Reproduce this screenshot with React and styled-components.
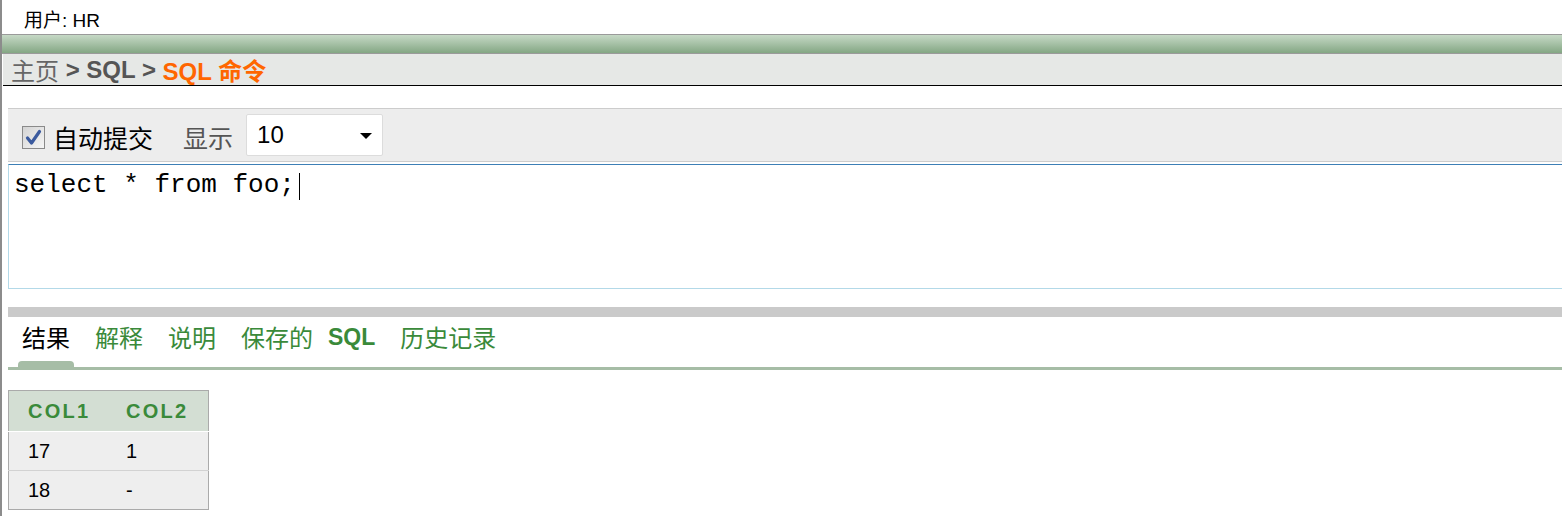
import React from 'react';
import styled, {createGlobalStyle} from 'styled-components';

const GlobalStyle = createGlobalStyle`
  html, body {
    margin: 0;
    padding: 0;
    background: #fff;
  }
  body {
    font-family: "Liberation Sans", Arial, "Noto Sans CJK SC", sans-serif;
    color: #000;
  }
`;

const Page = styled.div`
  min-height: 516px;
  border-left: 2px solid #8c8c8c;
  box-sizing: border-box;
  overflow: hidden;
`;

const UserBar = styled.div`
  height: 34px;
  display: flex;
  align-items: center;
  padding-left: 22px;
  padding-top: 2px;
  box-sizing: border-box;
  font-size: 19px;
`;

const GreenBar = styled.div`
  height: 18px;
  border-top: 1px solid #9a9a9a;
  border-bottom: 1px solid #9a9a9a;
  background: linear-gradient(#c6d9c6, #84a784);
`;

const Crumbs = styled.div`
  height: 31px;
  display: flex;
  align-items: center;
  padding-left: 8px;
  background: #e6e8e6;
  border-bottom: 1px solid #000;
  margin-left: 1px;
  font-size: 24px;
  white-space: pre;
`;

const Crumb = styled.span`
  color: ${p => (p.$current ? '#ff6600' : p.$home ? '#666' : '#555')};
  font-weight: ${p => (p.$home ? 'normal' : 'bold')};
`;

const Main = styled.div`
  padding-left: 6px;
  margin-top: 22px;
`;

const Toolbar = styled.div`
  height: 52px;
  display: flex;
  align-items: center;
  padding-left: 14px;
  background: #ededed;
  border-top: 1px solid #cccccc;
  border-bottom: 1px solid #cccccc;
  font-size: 25px;
  font-family: "Noto Sans CJK SC", sans-serif;
`;

const CheckBox = styled.span`
  width: 21px;
  height: 21px;
  border: 1px solid #8a8a8a;
  background: linear-gradient(135deg, #d4d4d4, #f6f6f6);
  display: flex;
  align-items: center;
  justify-content: center;
  margin-top: 5px;
`;

const Label = styled.span`
  color: ${p => (p.$muted ? '#555' : '#000')};
  margin-left: ${p => p.$gap || 0}px;
  margin-top: 4px;
  line-height: 1;
`;

const Select = styled.div`
  width: 137px;
  height: 42px;
  margin-left: 13px;
  background: #fff;
  border: 1px solid #dcdcdc;
  border-radius: 2px;
  box-sizing: border-box;
  display: flex;
  align-items: center;
  justify-content: space-between;
  padding: 0 10px 0 10px;
  font-family: "Liberation Sans", Arial, sans-serif;
  font-size: 24px;
`;

const Caret = styled.span`
  width: 0;
  height: 0;
  border-left: 6px solid transparent;
  border-right: 6px solid transparent;
  border-top: 6px solid #000;
  margin-top: 2px;
`;

const Editor = styled.div`
  margin-top: 2px;
  height: 125px;
  box-sizing: border-box;
  border: 1px solid #b3d9e8;
  border-top-color: #3d7fb6;
  border-right: none;
  padding: 5px 5px;
  font-family: "Liberation Mono", "Courier New", monospace;
  font-size: 26px;
  white-space: pre;
  display: flex;
  align-items: flex-start;
`;

const TextCursor = styled.span`
  display: inline-block;
  width: 1px;
  height: 27px;
  background: #000;
  margin-top: 3px;
  margin-left: 4px;
`;

const Divider = styled.div`
  margin-top: 18px;
  height: 10px;
  background: #cacaca;
`;

const Tabs = styled.div`
  display: flex;
  gap: 17px;
  padding-left: 10px;
  height: 50px;
  border-bottom: 3px solid #a6bda6;
  font-family: "Noto Sans CJK SC", sans-serif;
  font-size: 24px;
`;

const Tab = styled.div`
  position: relative;
  padding: 0 4px 12px;
  display: flex;
  align-items: center;
  color: ${p => (p.$active ? '#000' : '#3a8a3a')};
  white-space: pre;

  &::after {
    content: '';
    display: ${p => (p.$active ? 'block' : 'none')};
    position: absolute;
    left: 0;
    right: 0;
    bottom: -2px;
    height: 8px;
    background: #a6bda6;
    border-radius: 4px 4px 0 0;
  }
`;

const Latin = styled.span`
  font-family: "Liberation Sans", Arial, sans-serif;
  font-weight: bold;
  font-size: 23px;
  margin-left: 15px;
  margin-top: 2px;
`;

const Table = styled.table`
  margin-top: 20px;
  border-collapse: collapse;
  border: 1px solid #aaaaaa;
  width: 201px;
`;

const Th = styled.th`
  height: 40px;
  padding: 0 0 0 19px;
  text-align: left;
  background: #d3ded3;
  color: #3a8a3a;
  font-size: 20px;
  letter-spacing: 2.3px;
  font-weight: bold;
  border-bottom: 1px solid #fff;
  width: ${p => (p.$w ? `${p.$w}px` : 'auto')};
`;

const Td = styled.td`
  height: 38px;
  padding: 0 0 0 19px;
  background: #eeeeee;
  font-size: 20px;
  border-top: 1px solid #d2d2d2;
`;

const rows = [
  ['17', '1'],
  ['18', '-'],
];

const tabs = [
  {label: '结果', active: true},
  {label: '解释'},
  {label: '说明'},
  {label: '保存的', sql: true},
  {label: '历史记录'},
];

export default function App() {
  return (
    <Page>
      <GlobalStyle />
      <UserBar>用户: HR</UserBar>
      <GreenBar />
      <Crumbs>
        <Crumb $home>主页</Crumb>
        <Crumb> &gt; SQL &gt; </Crumb>
        <Crumb $current>SQL 命令</Crumb>
      </Crumbs>
      <Main>
        <Toolbar>
          <CheckBox>
            <svg width="17" height="17" viewBox="0 0 17 17">
              <path d="M2.5 9 L6.5 14 L14.5 2.5" fill="none" stroke="#3b5a9e" strokeWidth="3.2" strokeLinecap="round" strokeLinejoin="round" />
            </svg>
          </CheckBox>
          <Label $gap={8}>自动提交</Label>
          <Label $gap={30} $muted>显示</Label>
          <Select>
            <span>10</span>
            <Caret />
          </Select>
        </Toolbar>
        <Editor>
          select * from foo;<TextCursor />
        </Editor>
        <Divider />
        <Tabs>
          {tabs.map(t => (
            <Tab key={t.label} $active={t.active}>
              {t.label}
              {t.sql && <Latin>SQL</Latin>}
            </Tab>
          ))}
        </Tabs>
        <Table>
          <thead>
            <tr>
              <Th $w={79}>COL1</Th>
              <Th>COL2</Th>
            </tr>
          </thead>
          <tbody>
            {rows.map(r => (
              <tr key={r[0]}>
                <Td>{r[0]}</Td>
                <Td>{r[1]}</Td>
              </tr>
            ))}
          </tbody>
        </Table>
      </Main>
    </Page>
  );
}
